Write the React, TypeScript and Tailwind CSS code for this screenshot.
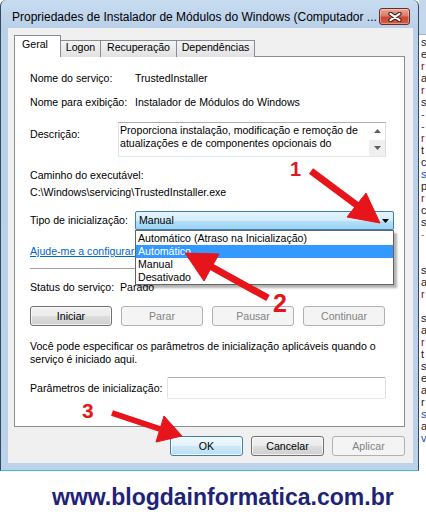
import React from 'react';

const fieldEdge = 'border border-[#abadb3] border-l-[#e2e3ea] border-r-[#dbdfe6] border-b-[#e3e9ef] bg-white';

const buttonLook = {
  normal: 'border-[#707070] bg-[linear-gradient(#f2f2f2,#ebebeb_49%,#dddddd_51%,#cfcfcf)] text-black shadow-[inset_0_0_0_1px_rgba(255,255,255,0.7)]',
  disabled: 'border-[#adb2b5] bg-[#f4f4f4] text-[#838383]',
  focus: 'border-[#3c7fb1] bg-[linear-gradient(#f0f8fd,#e2f1fb_49%,#cde8f8_51%,#bcdff3)] text-black shadow-[inset_0_0_0_1px_rgba(255,255,255,0.8)]',
};

const WinButton = ({ label, look, width }: { label: string; look: keyof typeof buttonLook; width: string }) => (
  <div className={`${width} h-[20px] shrink-0 flex items-center justify-center rounded-[3px] border ${buttonLook[look]}`}>
    {label}
  </div>
);

const Field = ({ label, value }: { label: string; value: string }) => (
  <div className="flex h-[13px] whitespace-nowrap">
    <span className="w-[105px] shrink-0">{label}</span>
    <span>{value}</span>
  </div>
);

const CloseButton = () => (
  <div className="mt-[8px] w-[31px] h-[17px] rounded-[3px] border border-[#6d2a1f] bg-[linear-gradient(#eaa79a,#d97a68_45%,#c84a33_55%,#d25e42)] flex items-center justify-center shadow-[inset_0_0_0_1px_rgba(255,255,255,0.35)]">
    <svg width="14" height="10" viewBox="0 0 14 10">
      <path d="M2.5 1.8 L11.5 8.2 M11.5 1.8 L2.5 8.2" stroke="#4a1a14" strokeWidth="4.2" strokeLinecap="round" />
      <path d="M2.5 1.8 L11.5 8.2 M11.5 1.8 L2.5 8.2" stroke="#ffffff" strokeWidth="2.2" strokeLinecap="round" />
    </svg>
  </div>
);

const Tabs = () => (
  <div className="flex items-end h-[22px] relative z-10">
    <div className="w-[47px] h-[22px] bg-white border border-b-0 border-[#898c95] pt-[2px] pl-[7px]">Geral</div>
    <div className="w-[40px] h-[17px] border-t border-r border-[#898c95] bg-linear-to-b from-[#f4f4f4] to-[#e2e2e2] text-center">Logon</div>
    <div className="w-[76px] h-[17px] border-t border-r border-[#898c95] bg-linear-to-b from-[#f4f4f4] to-[#e2e2e2] text-center">Recuperação</div>
    <div className="w-[78px] h-[17px] border-t border-r border-[#898c95] bg-linear-to-b from-[#f4f4f4] to-[#e2e2e2] text-center">Dependências</div>
  </div>
);

const options = ['Automático (Atraso na Inicialização)', 'Automático', 'Manual', 'Desativado'];

const Panel = () => (
  <div className="-mt-px h-[371px] border border-[#898c95] bg-white pl-[15px]">
    <div className="mt-[15px]">
      <Field label="Nome do serviço:" value="TrustedInstaller" />
    </div>
    <div className="mt-[11px]">
      <Field label="Nome para exibição:" value="Instalador de Módulos do Windows" />
    </div>

    <div className="mt-[13px] flex h-[35px]">
      <span className="w-[88px] shrink-0 pt-[6px]">Descrição:</span>
      <div className={`w-[268px] h-[35px] flex ${fieldEdge}`}>
        <div className="flex-1 pl-[1px] pt-[1px] whitespace-nowrap">
          Proporciona instalação, modificação e remoção de
          <br />
          atualizações e de componentes opcionais do
        </div>
        <div className="w-[16px] flex flex-col">
          <div className="h-[16px] flex items-center justify-center">
            <svg width="7" height="4" viewBox="0 0 7 4"><path d="M0 4 L3.5 0 L7 4 Z" fill="#5f5f5f" /></svg>
          </div>
          <div className="h-[16px] mt-auto flex items-center justify-center bg-[#efefef]">
            <svg width="7" height="4" viewBox="0 0 7 4"><path d="M0 0 L7 0 L3.5 4 Z" fill="#5f5f5f" /></svg>
          </div>
        </div>
      </div>
    </div>

    <div className="mt-[12px] h-[13px]">Caminho do executável:</div>
    <div className="mt-[4px] h-[13px] whitespace-nowrap">C:\Windows\servicing\TrustedInstaller.exe</div>

    <div className="mt-[12px] flex items-center h-[19px]">
      <span className="w-[105px] shrink-0 whitespace-nowrap">Tipo de inicialização:</span>
      <div className="relative w-[259px] h-[19px]">
        <div className="h-full flex items-center justify-between pl-[3px] pr-[4px] rounded-[2px] border border-[#3c7fb1] bg-[linear-gradient(#e6f4fc,#d3ecfb_50%,#b5e0f8_50%,#9dd3f2)]">
          <span>Manual</span>
          <svg width="7" height="4" viewBox="0 0 7 4"><path d="M0 0 L7 0 L3.5 4 Z" fill="#000" /></svg>
        </div>
        <div className="absolute left-0 top-[19px] z-20 w-[259px] border border-[#646464] bg-white pt-[1px] shadow-[3px_3px_2px_rgba(0,0,0,0.3)]">
          {options.map((o, i) => (
            <div
              key={o}
              className={i === 1 ? 'h-[13px] pl-[2px] whitespace-nowrap bg-[#3399ff] text-white' : 'h-[13px] pl-[2px] whitespace-nowrap'}
            >
              {o}
            </div>
          ))}
        </div>
      </div>
    </div>

    <div className="mt-[15px] h-[13px] whitespace-nowrap text-[#0066cc] underline">
      Ajude-me a configurar as opções de recuperação de serviço.
    </div>
    <div className="mt-[10px] mr-[18px] h-px bg-[#a0a0a0]" />

    <div className="mt-[12px] flex h-[13px] whitespace-nowrap">
      <span className="w-[90px] shrink-0">Status do serviço:</span>
      <span>Parado</span>
    </div>

    <div className="mt-[12px] flex gap-[9px]">
      <WinButton label="Iniciar" look="normal" width="w-[82px]" />
      <WinButton label="Parar" look="disabled" width="w-[82px]" />
      <WinButton label="Pausar" look="disabled" width="w-[82px]" />
      <WinButton label="Continuar" look="disabled" width="w-[82px]" />
    </div>

    <div className="mt-[14px] whitespace-nowrap">
      Você pode especificar os parâmetros de inicialização aplicáveis quando o
      <br />
      serviço é iniciado aqui.
    </div>

    <div className="mt-[11px] flex items-center h-[22px]">
      <span className="w-[137px] shrink-0 whitespace-nowrap">Parâmetros de inicialização:</span>
      <div className={`w-[219px] h-[22px] rounded-[2px] ${fieldEdge}`} />
    </div>
  </div>
);

const DialogWindow = () => (
  <div className="w-[419px] shrink-0 flex flex-col rounded-t-[6px] border-x border-[#34495f] border-b border-b-[#3cbcd6] bg-[linear-gradient(#c8dcf0,#bad0e9_28px,#bcd2ea)]">
    <div className="h-[28px] flex items-start justify-between pl-[11px] pr-[8px]">
      <span className="mt-[10px] text-[12px] leading-[14px] whitespace-nowrap">
        Propriedades de Instalador de Módulos do Windows (Computador ...
      </span>
      <CloseButton />
    </div>
    <div className="ml-[7px] mr-[5px] h-[435px] bg-[#f0f0f0] pt-[7px] pl-[6px] pr-[8px]">
      <Tabs />
      <Panel />
      <div className="mt-[9px] flex justify-end gap-[8px]">
        <WinButton label="OK" look="focus" width="w-[73px]" />
        <WinButton label="Cancelar" look="normal" width="w-[73px]" />
        <WinButton label="Aplicar" look="disabled" width="w-[73px]" />
      </div>
    </div>
  </div>
);

const behindLetters: [string, string][] = [
  ['s', '#222'], ['e', '#222'], ['r', '#7b1537'], ['a', '#222'], ['r', '#7b1537'], ['s', '#222'],
  ['-', '#1c4fa8'], ['-', '#1c4fa8'], ['r', '#7b1537'], ['t', '#222'], ['c', '#222'], ['s', '#1c4fa8'],
  ['p', '#222'], ['r', '#7b1537'], ['c', '#222'], ['s', '#222'], ['-', '#c47a00'], ['', '#222'],
  ['', '#222'], ['s', '#222'], ['a', '#222'], ['r', '#7b1537'], ['', '#222'], ['s', '#222'],
  ['a', '#222'], ['r', '#7b1537'], ['t', '#222'], ['s', '#222'], ['e', '#222'], ['a', '#222'],
  ['r', '#222'], ['s', '#1c4fa8'], ['a', '#222'], ['v', '#1c4fa8'],
];

const BehindWindow = () => (
  <div className="w-[7px] shrink-0 flex flex-col overflow-hidden bg-white">
    <div className="h-[35px] shrink-0 bg-[#c3d7ed] border-b border-[#9fb4cc]" />
    <div className="pl-[2px] pt-[1px] text-[11px] leading-[12px]">
      {behindLetters.map(([c, col], i) => (
        <div key={i} className="h-[12px]" style={{ color: col }}>
          {c}
        </div>
      ))}
    </div>
  </div>
);

const Annotations = () => (
  <div className="absolute inset-0 z-30 pointer-events-none">
    <svg width="426" height="520" viewBox="0 0 426 520" className="absolute inset-0">
      <g fill="#e8141b" stroke="#e8141b">
        <line x1="311" y1="171" x2="358" y2="206" strokeWidth="7" />
        <polygon points="347,217 366,193 380,223" strokeWidth="1" />
        <line x1="268" y1="298" x2="210" y2="266" strokeWidth="7" />
        <polygon points="219,254 204,281 185,253" strokeWidth="1" />
        <line x1="112" y1="413" x2="160" y2="429" strokeWidth="6" />
        <polygon points="156,442 164,416 182,436" strokeWidth="1" />
      </g>
    </svg>
    <span className="absolute left-[290px] top-[159px] text-[20px] leading-[20px] font-bold text-[#e3171b]">1</span>
    <span className="absolute left-[273px] top-[291px] text-[25px] leading-[25px] font-bold text-[#e3171b]">2</span>
    <span className="absolute left-[82px] top-[400px] text-[21px] leading-[21px] font-bold text-[#e3171b]">3</span>
  </div>
);

export default function App() {
  return (
    <div className="relative w-[426px] h-[520px] overflow-hidden bg-white font-['Liberation_Sans',Arial,sans-serif] text-[10.6px] leading-[13px] text-black">
      <div className="flex h-[471px]">
        <DialogWindow />
        <BehindWindow />
      </div>
      <div className="mt-[13px] pl-[52px] text-[23px] leading-[26px] font-bold text-[#1e2378] whitespace-nowrap">
        www.blogdainformatica.com.br
      </div>
      <Annotations />
    </div>
  );
}
